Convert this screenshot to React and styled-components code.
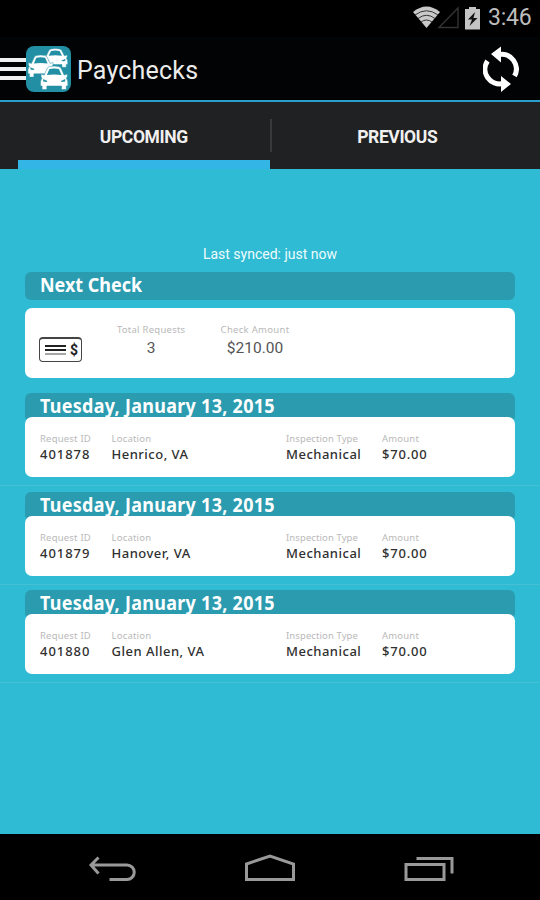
import React from "react";
import styled, { createGlobalStyle } from "styled-components";

const requests = [
  { id: "401878", location: "Henrico, VA" },
  { id: "401879", location: "Hanover, VA" },
  { id: "401880", location: "Glen Allen, VA" },
];

export default function App() {
  return (
    <Screen>
      <GlobalStyle />
      <StatusBar>
        <StatusIcons />
        <Clock>3:46</Clock>
      </StatusBar>
      <ActionBar>
        <MenuLines>
          <span />
          <span />
          <span />
        </MenuLines>
        <AppLogo />
        <Title>Paychecks</Title>
        <SyncIcon />
      </ActionBar>
      <Tabs>
        <Tab $active>UPCOMING</Tab>
        <Divider />
        <Tab>PREVIOUS</Tab>
      </Tabs>
      <Content>
        <Synced>Last synced: just now</Synced>
        <SectionHeader>
          <Heading>Next Check</Heading>
        </SectionHeader>
        <SummaryCard>
          <CheckIcon />
          <Summary $width={68}>
            <Label $spacing={0.25}>Total Requests</Label>
            <SummaryValue>3</SummaryValue>
          </Summary>
          <Summary $width={140}>
            <Label $spacing={0.3}>Check Amount</Label>
            <SummaryValue>$210.00</SummaryValue>
          </Summary>
        </SummaryCard>
        {requests.map((request) => (
          <Day key={request.id}>
            <DayHeader>
              <Heading $spacing={0.33}>Tuesday, January 13, 2015</Heading>
            </DayHeader>
            <RequestCard>
              <Field>
                <Label>Request ID</Label>
                <Value $spacing={0.95}>{request.id}</Value>
              </Field>
              <Field>
                <Label>Location</Label>
                <Value $spacing={0.5}>{request.location}</Value>
              </Field>
              <Field>
                <Label $spacing={0.1}>Inspection Type</Label>
                <Value $spacing={0.5}>Mechanical</Value>
              </Field>
              <Field>
                <Label>Amount</Label>
                <Value $spacing={0.8}>$70.00</Value>
              </Field>
            </RequestCard>
          </Day>
        ))}
      </Content>
      <NavBar>
        <svg width="48" height="30" viewBox="0 0 48 30">
          <path d="M2.500 15H39a7.200 7.200 0 0 1 0 14.500H21.500M10.500 7.500L3 15L10.500 23.500" />
        </svg>
        <svg width="52" height="32" viewBox="0 0 52 32">
          <path d="M2.500 14L26 6L49.500 14V29.500H2.500Z" />
        </svg>
        <svg width="50" height="32" viewBox="0 0 50 32">
          <path d="M2 14.500H40V29.500H2ZM12.500 8.500H48V23.500" />
        </svg>
      </NavBar>
    </Screen>
  );
}

function StatusIcons() {
  return (
    <svg width="70" height="26" viewBox="0 0 70 26">
      <path d="M0 7Q13.500 -4 27 7L13.500 23Z" fill="#c9c9c9" />
      <g fill="none" stroke="#222" strokeWidth="0.900">
        <path d="M2 10Q13.500 1.500 25 10" />
        <path d="M5 13.500Q13.500 7 22 13.500" />
        <path d="M8 17Q13.500 13 19 17" />
      </g>
      <path d="M26 22.500L45 3V22.500Z" fill="none" stroke="#333" strokeWidth="1.400" />
      <path d="M52 4h4V2h7v2h4v20.500H52Z" fill="#c4c4c4" />
      <path d="M62 7L55 14.500h4L56.500 21L64.500 13h-4Z" fill="#111" />
    </svg>
  );
}

function Car({ transform }) {
  return (
    <g transform={transform}>
      <path
        d="M4 9L7 2Q8 0 13.500 0T20 2L23 9L26 8V11L25 12Q27 14 26.500 20H25V23.500H20.500V20H6.500V23.500H2V20H.5Q0 14 2 12L1 11V8Z"
        fill="#fff"
        stroke="#238fa5"
        strokeWidth="0.500"
      />
      <path d="M6.500 9L9 3Q13.500 2 18 3L20.500 9Q13.500 8 6.500 9Z" fill="#238fa5" />
      <path
        d="M3 13L7 15L6.500 16L3 15.500ZM24 13L20 15L20.500 16L24 15.500Z"
        fill="#238fa5"
      />
    </g>
  );
}

function AppLogo() {
  return (
    <svg width="45" height="46" viewBox="0 0 45 46">
      <rect width="45" height="46" rx="8" fill="#238fa5" />
      <Car transform="translate(16.500 2.500) scale(.95 .8)" />
      <Car transform="translate(1.500 9) scale(.98 .94)" />
      <Car transform="translate(14 20) scale(1.050 1)" />
    </svg>
  );
}

function SyncIcon() {
  return (
    <svg width="36" height="48" viewBox="0 0 36 48">
      <g fill="none" stroke="#fff" strokeWidth="5">
        <path d="M16 9.500A14.700 14.700 0 0 1 31.500 31" />
        <path d="M4.500 16A14.700 14.700 0 0 0 20 38.500" />
      </g>
      <path d="M8 9L18 1.500V17.500ZM28 39L18 31V47Z" fill="#fff" />
    </svg>
  );
}

function CheckIcon() {
  return (
    <CheckBox>
      <svg width="24" height="14" viewBox="0 0 24 14">
        <path d="M0 3H21M0 7H21" stroke="#222" strokeWidth="2" />
        <path d="M0 11H21" stroke="#888" strokeWidth="1.500" />
      </svg>
      <span>$</span>
    </CheckBox>
  );
}

const GlobalStyle = createGlobalStyle`
  * {
    box-sizing: border-box;
  }
  body {
    margin: 0;
    background: #000;
  }
`;

const Screen = styled.div`
  display: flex;
  flex-direction: column;
  width: 540px;
  height: 900px;
  overflow: hidden;
  background: #2fbbd3;
  font-family: Roboto, "Liberation Sans", sans-serif;
`;

const StatusBar = styled.header`
  display: flex;
  justify-content: flex-end;
  align-items: center;
  height: 37px;
  padding: 0 8px 1px 0;
  background: #000;
`;

const Clock = styled.span`
  width: 44px;
  margin-left: 5px;
  color: #bdbdbd;
  font-size: 23px;
  line-height: 38px;
  letter-spacing: -0.2px;
`;

const ActionBar = styled.div`
  display: flex;
  align-items: center;
  height: 65px;
  padding-right: 21px;
  background: #020304;
  border-bottom: 2px solid #2b9fcc;
`;

const MenuLines = styled.div`
  display: flex;
  flex-direction: column;
  gap: 5px;
  width: 26px;

  span {
    height: 4px;
    background: #f1f1f1;
  }
`;

const Title = styled.h1`
  flex: 1;
  margin: 4px 0 0 6px;
  color: #ececec;
  font-size: 25px;
  font-weight: 400;
  letter-spacing: 0.2px;
`;

const Tabs = styled.nav`
  display: flex;
  align-items: center;
  height: 67px;
  padding: 0 17px 0 18px;
  background: #202122;
`;

const Tab = styled.div`
  flex: 1;
  height: 67px;
  padding-top: 1px;
  color: #f0f0f0;
  font-size: 17.5px;
  font-weight: 700;
  line-height: 68px;
  letter-spacing: -0.4px;
  text-align: center;
  box-shadow: ${({ $active }) => ($active ? "inset 0 -9px #33b5e5" : "none")};
`;

const Divider = styled.div`
  width: 2px;
  height: 33px;
  background: #39393b;
`;

const Content = styled.main`
  flex: 1;
  padding-top: 75px;
`;

const Synced = styled.p`
  margin: 0 0 7px;
  color: #eefbfd;
  font-size: 14px;
  line-height: 21px;
  text-align: center;
`;

const SectionHeader = styled.div`
  height: 28px;
  margin: 0 25px 8px;
  padding-left: 15px;
  background: #2b9bb0;
  border-radius: 6px;
`;

const Heading = styled.h2`
  width: max-content;
  margin: 0;
  color: #fff;
  font-family: "Noto Sans", sans-serif;
  font-size: 19.5px;
  font-weight: 700;
  line-height: 26px;
  letter-spacing: ${({ $spacing = 0 }) => $spacing}px;
  transform: scaleX(0.92);
  transform-origin: left;
`;

const SummaryCard = styled.section`
  display: flex;
  height: 70px;
  margin: 0 25px 15px;
  padding: 14px 0 0 14px;
  background: #fff;
  border-radius: 7px;
`;

const CheckBox = styled.div`
  display: flex;
  align-items: center;
  justify-content: space-between;
  width: 43px;
  height: 25px;
  margin: 15px 35px 0 0;
  padding: 0 3px 0 5px;
  border: 1.5px solid #444;
  border-top-width: 2px;
  border-radius: 4px;

  span {
    color: #222;
    font-size: 14px;
    font-weight: 700;
  }
`;

const Summary = styled.div`
  width: ${({ $width }) => $width}px;
  text-align: center;
`;

const Label = styled.div`
  color: #b9b9b9;
  font-family: "Noto Sans", sans-serif;
  font-size: 9.5px;
  line-height: 15px;
  letter-spacing: ${({ $spacing = 0.2 }) => $spacing}px;
  white-space: nowrap;
`;

const SummaryValue = styled.div`
  color: #555;
  font-size: 15.5px;
  line-height: 22px;
`;

const Day = styled.section`
  height: 98.5px;
  padding: 0 25px;
  background: linear-gradient(#45bfd4, #45bfd4) 0 92px / 100% 1px no-repeat;
`;

const DayHeader = styled.div`
  height: 29px;
  margin-bottom: -5px;
  padding-left: 15px;
  background: #2b9bb0;
  border-radius: 6px;
`;

const RequestCard = styled.div`
  position: relative;
  display: grid;
  grid-template-columns: 71.5px 174.5px 96px 1fr;
  height: 60px;
  padding: 14px 0 0 15px;
  background: #fff;
  border-radius: 7px;
`;

const Field = styled.div`
  min-width: 0;
`;

const Value = styled.div`
  color: #303030;
  font-family: "Noto Sans", sans-serif;
  font-size: 13px;
  font-weight: 500;
  line-height: 17px;
  letter-spacing: ${({ $spacing }) => $spacing}px;
  white-space: nowrap;
`;

const NavBar = styled.footer`
  display: flex;
  align-items: flex-start;
  justify-content: space-between;
  height: 66px;
  padding: 16px 86px 0 88px;
  background: #000;

  svg {
    fill: none;
    stroke: #999;
    stroke-width: 3;
    overflow: visible;
  }
`;
